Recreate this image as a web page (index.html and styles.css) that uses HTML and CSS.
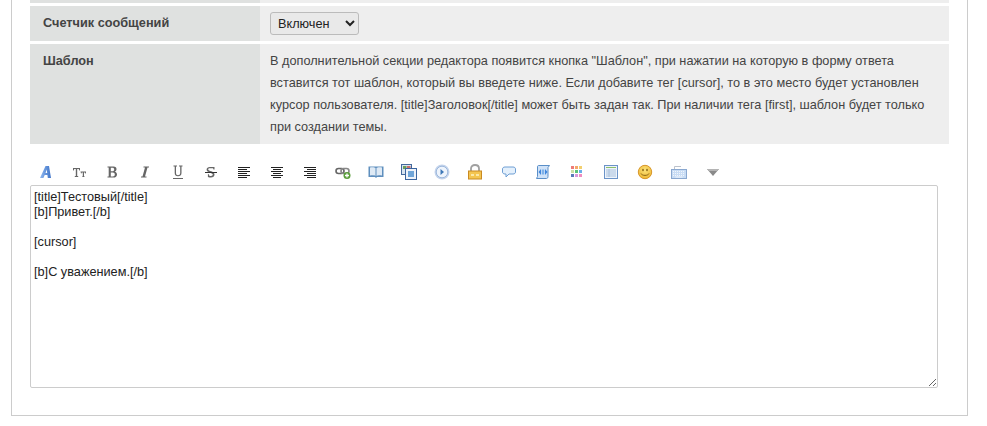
FILE: index.html
```html
<!DOCTYPE html>
<html lang="ru">
<head>
<meta charset="utf-8">
<title>Шаблон</title>
<link rel="stylesheet" href="styles.css">
</head>
<body>
<div class="panel">
  <div class="settings">
    <div class="label stub"></div><div class="value stub"></div>
    <div class="label">Счетчик сообщений</div>
    <div class="value compact"><select class="select"><option>Включен</option><option>Выключен</option></select></div>
    <div class="label">Шаблон</div>
    <div class="value">В дополнительной секции редактора появится кнопка "Шаблон", при нажатии на которую в форму ответа вставится тот шаблон, который вы введете ниже. Если добавите тег [cursor], то в это место будет установлен курсор пользователя. [title]Заголовок[/title] может быть задан так. При наличии тега [first], шаблон будет только при создании темы.</div>
  </div>
  <div class="toolbar">
    <svg class="icon" viewBox="0 0 16 16"><defs><linearGradient id="fontA" x1="0" y1="0" x2="1" y2="0"><stop offset="0" stop-color="#8fb8f0"/><stop offset="1" stop-color="#3f74c8"/></linearGradient></defs><path fill-rule="evenodd" d="M2 14 7.500 2h3.500l2 12H9.800l-.4-3H6.700l-1.300 3zM7.500 9h1.700l-.5-3.500z" fill="url(#fontA)"/></svg>
    <svg class="icon" viewBox="0 0 16 16"><path d="M2 4h7v2.500h-.7L7.700 5H6.200v7h1v1H3.800v-1h1V5H3.300l-.6 1.500H2zM9.500 7.500h5.500v2h-.6l-.4-1h-1v4h.8v.5h-2.800v-.5h.8v-4h-1l-.4 1h-.4z" fill="#666"/></svg>
    <svg class="icon" viewBox="0 0 16 16"><path fill-rule="evenodd" d="M3.500 2.500h6c2 0 3 1 3 2.800 0 1.200-.7 2-1.700 2.400 1.300.3 2.200 1.200 2.200 2.700 0 2-1.400 3.100-3.500 3.100h-6v-1h1.200v-9H3.500zM6.800 3.700v3.500h1.500c1.200 0 1.900-.6 1.900-1.800s-.7-1.700-1.900-1.700zm0 4.700v4h2c1.300 0 2-.7 2-2s-.7-2-2-2z" fill="#666"/></svg>
    <svg class="icon" viewBox="0 0 16 16"><path d="M6.500 2.500H12v1h-1.500L8 12.500h1.500v1H4v-1h1.500L8 3.500H6.500z" fill="#666"/></svg>
    <svg class="icon" viewBox="0 0 16 16"><path d="M3.500 1.500h3.500v1H6v6.500c0 1.500.8 2.200 2 2.200s2.200-.7 2.200-2.200V2.500H9v-1h3.500v1h-1v6.500c0 2.200-1.400 3.300-3.500 3.300S4.700 11.200 4.700 9V2.500h-1.200zM3 14h10v1H3z" fill="#666"/></svg>
    <svg class="icon" viewBox="0 0 16 16"><path d="M11.500 3v2.500h-1l-.5-1.300H6.700c-.9 0-1.500.5-1.500 1.300 0 1.700 6.300 1.500 6.300 5 0 1.800-1.400 3-3.600 3-1 0-2-.2-3-.6v-2.700h1L6.500 12h1.500c1.100 0 1.800-.5 1.800-1.400 0-1.900-6.200-1.500-6.200-5C3.600 4 5 3 6.800 3z" fill="#666"/><path d="M2 8h12v1H2z" fill="#333"/></svg>
    <svg class="icon" viewBox="0 0 16 16"><path d="M2 3.500h12M2 5.500h9M2 7.500h12M2 9.500h9M2 11.500h12M2 13.500h9" stroke="#222" fill="none"/></svg>
    <svg class="icon" viewBox="0 0 16 16"><path d="M2 3.500h12M4 5.500h8M2 7.500h12M4 9.500h8M2 11.500h12M4 13.500h8" stroke="#222" fill="none"/></svg>
    <svg class="icon" viewBox="0 0 16 16"><path d="M2 3.500h12M5 5.500h9M2 7.500h12M5 9.500h9M2 11.500h12M5 13.500h9" stroke="#222" fill="none"/></svg>
    <svg class="icon" viewBox="0 0 16 16"><rect x="1" y="4.500" width="8" height="5" rx="2.500" fill="none" stroke="#666" stroke-width="1.600"/><rect x="6" y="4.500" width="8" height="5" rx="2.500" fill="none" stroke="#888" stroke-width="1.600"/><circle cx="12" cy="11.500" r="3.500" fill="#5a9e3a"/><path d="M12 9.500v4M10 11.500h4" stroke="#fff" stroke-width="1.300"/></svg>
    <svg class="icon" viewBox="0 0 16 16"><path d="M.5 2.500h15v10.500H9l-1 1-1-1H.5z" fill="#5f8fbe"/><path d="M2 3.500c2-.5 4.500-.5 5.500.5v8c-1-.8-3.500-.8-5.500-.5zM14 3.500c-2-.5-4.500-.5-5.500.5v8c1-.8 3.500-.8 5.500-.5z" fill="#dfeaf5"/></svg>
    <svg class="icon" viewBox="0 0 16 16"><rect x=".5" y=".5" width="10" height="10" fill="#d8e4f0" stroke="#44699c"/><rect x="2" y="2" width="3.500" height="3" fill="#6a9e5a"/><rect x="6" y="2" width="3.500" height="3" fill="#c96a6a"/><rect x="4.500" y="4.500" width="11" height="11" fill="#eef3fa" stroke="#3b659f"/><rect x="7" y="7" width="6" height="6" fill="#6fa5d8"/></svg>
    <svg class="icon" viewBox="0 0 16 16"><circle cx="8" cy="8" r="7.500" fill="#c4d4ec"/><circle cx="8" cy="8" r="5.800" fill="#eef4fc" stroke="#9db8dc"/><path d="M6.500 5v6L10 8z" fill="#3e78b8"/></svg>
    <svg class="icon" viewBox="0 0 16 16"><path d="M4 7V4.500C4 2.500 5.700 1 8 1s4 1.500 4 3.500V7" fill="none" stroke="#a0a0a0" stroke-width="1.800"/><rect x="1.500" y="7" width="13" height="8" fill="#f4c550" stroke="#c98a22"/><path d="M4 10h3v2H4zM9 10h3v2H9z" fill="#fbe8a8"/></svg>
    <svg class="icon tail" viewBox="0 0 16 16"><path d="M4 3h8c1.500 0 2.500.8 2.500 2v3c0 1.200-1 2-2.500 2H8l-3 3v-3H4c-1.500 0-2.500-.8-2.500-2V5C1.500 3.800 2.500 3 4 3z" fill="#e4f0fc" stroke="#6f9fd4"/></svg>
    <svg class="icon tail" viewBox="0 0 16 16"><path d="M3.500 1.500h11L13 3.500v9c0 1-.5 2-1.500 2h-10l1-2V3c0-1 .3-1.500 1-1.500z" fill="#cfe2f8" stroke="#5a8fc8"/><path d="M6 5 3.500 8 6 11zM10 5l2.500 3L10 11z" fill="#3f86dc"/><rect x="6.800" y="5.500" width="2.400" height="5" fill="#7fb2ea"/></svg>
    <svg class="icon tail" viewBox="0 0 16 16"><rect x="2" y="2" width="3" height="3" fill="#ee7b78"/><rect x="6" y="2" width="3" height="3" fill="#f5a86a"/><rect x="10" y="2" width="3" height="3" fill="#f2d070"/><rect x="2" y="6" width="3" height="3" fill="#cde0a8"/><rect x="6" y="6" width="3" height="3" fill="#5cc27a"/><rect x="10" y="6" width="3" height="3" fill="#68aee8"/><rect x="2" y="10" width="3" height="3" fill="#5a7ab8"/><rect x="6" y="10" width="3" height="3" fill="#d898dc"/><rect x="10" y="10" width="3" height="3" fill="#f08cc0"/></svg>
    <svg class="icon tail" viewBox="0 0 16 16"><rect x="1.500" y="1.500" width="13" height="13" fill="#eef4fb" stroke="#6b93c8"/><path d="M3 3.500h10" stroke="#8cc06c"/><path d="M3 6h10M3 8h10M3 10h10M3 12h10M6 5v8" stroke="#a8c0dc" fill="none"/></svg>
    <svg class="icon tail" viewBox="0 0 16 16"><defs><radialGradient id="smile" cx=".5" cy=".35" r=".7"><stop offset="0" stop-color="#fbe27a"/><stop offset="1" stop-color="#eeb52e"/></radialGradient></defs><circle cx="8" cy="8" r="6.700" fill="url(#smile)" stroke="#d8962a"/><ellipse cx="6" cy="6" rx=".8" ry="1.200" fill="#8a6414"/><ellipse cx="10" cy="6" rx=".8" ry="1.200" fill="#8a6414"/><path d="M4 9.500c1 2.500 7 2.500 8 0" fill="none" stroke="#8a6414"/></svg>
    <svg class="icon tail" viewBox="0 0 16 16"><path d="M3.500 5.500v-3H10" fill="none" stroke="#bcc2cc"/><rect x=".5" y="5.500" width="15" height="9" fill="#c8dcf4" stroke="#8aa8d0"/><path d="M2 7.500h12M2 9.500h12M2 11.500h12" stroke="#f0f5fb" stroke-dasharray="1 1"/><path d="M4.500 13h7" stroke="#f0f5fb"/></svg>
    <svg class="icon tail" viewBox="0 0 16 16"><path d="M2 5h12L8 12z" fill="#8a8a8a"/><path d="M2 5h12l-2 2H4z" fill="#b4b4b4"/></svg>
  </div>
  <textarea class="editor">[title]Тестовый[/title]
[b]Привет.[/b]

[cursor]

[b]С уважением.[/b]</textarea>
</div>
</body>
</html>
```
FILE: styles.css
```css
html, body {
  margin: 0;
  padding: 0;
  background: #fff;
  overflow: hidden;
}
body {
  font-family: "Liberation Sans", Arial, sans-serif;
  font-size: 12.72px;
  color: #444;
}
.panel {
  width: 919px;
  margin-left: 11px;
  padding: 0 18px 27px;
  border: 1px solid #ccc;
  border-top: 0;
}
.settings {
  display: grid;
  grid-template-columns: 230px 689px;
  row-gap: 3px;
}
.label {
  background: #dfe1e0;
  padding: 6px 13px;
  font-weight: bold;
  line-height: 22px;
}
.value {
  background: #eee;
  padding: 6px 10px;
  line-height: 22px;
}
.compact {
  display: flex;
  padding: 6px 10px;
}
.stub {
  height: 3px;
  padding: 0;
}
.select {
  width: 89px;
  height: 23px;
  padding: 0 0 0 3px;
  font: 12.72px "Liberation Sans", Arial, sans-serif;
  color: #222;
  background-color: #e9e9e9;
  border: 1px solid #bbb;
  border-radius: 3px;
}
.toolbar {
  display: flex;
  gap: 17px;
  padding: 20px 0 5px 8px;
}
.icon {
  flex: none;
  width: 16px;
  height: 16px;
}
.tail {
  margin-left: 1px;
}
.editor {
  display: block;
  box-sizing: border-box;
  width: 908px;
  height: 203px;
  margin: 0;
  padding: 3px;
  border: 1px solid #ccc;
  border-radius: 2px;
  font: 12.72px/15px "Liberation Sans", Arial, sans-serif;
  color: #222;
  background: #fff;
  outline: none;
}
```
